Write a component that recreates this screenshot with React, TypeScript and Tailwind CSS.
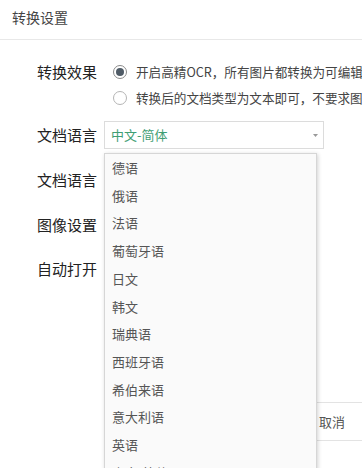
import React from "react";

const items = ["德语", "俄语", "法语", "葡萄牙语", "日文", "韩文", "瑞典语", "西班牙语", "希伯来语", "意大利语", "英语", "中文-简体"];

export default function App() {
  const font = { fontFamily: '"Noto Sans CJK SC", "Noto Sans", sans-serif' };
  return (
    <div className="relative w-[362px] h-[468px] overflow-hidden bg-white" style={font}>
      <div className="h-[40px] border-b border-[#e8e8e8] pl-[12px] pt-[4px]">
        <span className="text-[14px] leading-[22px] text-[#444]">转换设置</span>
      </div>
      <div className="flex flex-col">
        <div className="flex mt-[19px]">
          <div className="w-[97px] shrink-0 text-right text-[15px] leading-[26px] text-[#222]">转换效果</div>
          <div className="ml-[16px] flex flex-col">
            <div className="flex items-center h-[26px] whitespace-nowrap">
              <span className="shrink-0 w-[14px] h-[14px] rounded-full border border-[#8a8a8a] flex items-center justify-center">
                <span className="w-[8px] h-[8px] rounded-full bg-[#4f5b66]" />
              </span>
              <span className="ml-[9px] text-[12.6px] text-[#444]">开启高精OCR，所有图片都转换为可编辑文本</span>
            </div>
            <div className="flex items-center h-[26px] whitespace-nowrap">
              <span className="shrink-0 w-[14px] h-[14px] rounded-full border border-[#b5b5b5]" />
              <span className="ml-[9px] text-[12.6px] text-[#444]">转换后的文档类型为文本即可，不要求图片转换</span>
            </div>
          </div>
        </div>
        <div className="flex items-center mt-[10px] h-[28px]">
          <div className="w-[97px] shrink-0 text-right text-[15px] text-[#222]">文档语言</div>
          <div className="ml-[7px] w-[220px] h-[28px] border border-[#dcdcdc] flex items-center pl-[6px] pr-[5px]">
            <span className="text-[13px] text-[#3f9e74] flex-1">中文-简体</span>
            <svg width="5" height="3" viewBox="0 0 5 3"><path d="M0 0h5L2.5 3z" fill="#999" /></svg>
          </div>
        </div>
        <div className="flex items-center mt-[17px] h-[28px]">
          <div className="w-[97px] shrink-0 text-right text-[15px] text-[#222]">文档语言</div>
        </div>
        <div className="flex items-center mt-[17px] h-[28px]">
          <div className="w-[97px] shrink-0 text-right text-[15px] text-[#222]">图像设置</div>
        </div>
        <div className="flex items-center mt-[16px] h-[28px]">
          <div className="w-[97px] shrink-0 text-right text-[15px] text-[#222]">自动打开</div>
        </div>
        <div className="mt-[119px] flex pl-[297px]">
          <div className="w-[80px] h-[39px] shrink-0 border-y border-[#e3e3e3] flex items-center pl-[22px] text-[13px] text-[#555]">取消</div>
        </div>
      </div>
      <div className="absolute left-[104px] top-[153px] w-[213px] h-[330px] bg-[#fafafa] border border-[#d6d6d6] shadow-[1px_1px_4px_rgba(0,0,0,0.18)]">
        {items.map((t) => (
          <div key={t} className="h-[27.7px] flex items-center pl-[7px] text-[13px] text-[#555]">{t}</div>
        ))}
      </div>
    </div>
  );
}
